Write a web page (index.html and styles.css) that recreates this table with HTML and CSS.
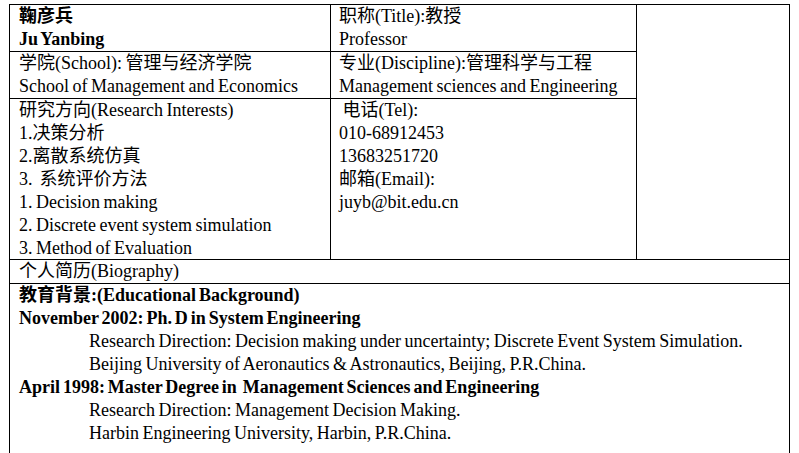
FILE: index.html
```html
<!DOCTYPE html>
<html lang="zh-CN">
<head>
<meta charset="utf-8">
<title>鞠彦兵 Ju Yanbing</title>
<link rel="stylesheet" href="styles.css">
</head>
<body>
<div class="sheet">
  <div class="cell c1 r1">
    <div class="b">鞠彦兵</div>
    <div class="b">Ju Yanbing</div>
  </div>
  <div class="cell c2 r1">
    <div>职称(Title):教授</div>
    <div>Professor</div>
  </div>
  <div class="cell c3 photo"></div>
  <div class="cell c1 r2">
    <div>学院(School): 管理与经济学院</div>
    <div>School of Management and Economics</div>
  </div>
  <div class="cell c2 r2">
    <div>专业(Discipline):管理科学与工程</div>
    <div>Management sciences and Engineering</div>
  </div>
  <div class="cell c1 r3">
    <div>研究方向(Research Interests)</div>
    <div>1.决策分析</div>
    <div>2.离散系统仿真</div>
    <div>3.&nbsp; 系统评价方法</div>
    <div>1. Decision making</div>
    <div>2. Discrete event system simulation</div>
    <div>3. Method of Evaluation</div>
  </div>
  <div class="cell c2 r3">
    <div>&nbsp;电话(Tel):</div>
    <div>010-68912453</div>
    <div>13683251720</div>
    <div>邮箱(Email):</div>
    <div>juyb@bit.edu.cn</div>
  </div>
  <div class="cell full bio">个人简历(Biography)</div>
  <div class="cell full edu">
    <div class="b">教育背景:(Educational Background)</div>
    <div class="b">November 2002: Ph. D in System Engineering</div>
    <div class="ind">Research Direction: Decision making under uncertainty; Discrete Event System Simulation.</div>
    <div class="ind">Beijing University of Aeronautics &amp; Astronautics, Beijing, P.R.China.</div>
    <div class="b">April 1998: Master Degree in&nbsp; Management Sciences and Engineering</div>
    <div class="ind">Research Direction: Management Decision Making.</div>
    <div class="ind">Harbin Engineering University, Harbin, P.R.China.</div>
    <div class="ind">&nbsp;</div>
  </div>
</div>
</body>
</html>
```
FILE: styles.css
```css
html, body {
  margin: 0;
  padding: 0;
  background: #ffffff;
}
body {
  font-family: "Liberation Serif", "Noto Sans CJK SC", serif;
  font-size: 18px;
  line-height: 23px;
  color: #000000;
  word-spacing: -1px;
}
.sheet {
  margin: 4px 0 0 9px;
  width: 780px;
  display: grid;
  grid-template-columns: 321px 306px 153px;
  grid-template-rows: 47px 47px 161px 24px auto;
  border-left: 1px solid #000;
  border-top: 1px solid #000;
}
.cell {
  border-right: 1px solid #000;
  border-bottom: 1px solid #000;
  white-space: nowrap;
  overflow: visible;
}
.c1 { grid-column: 1; padding-left: 9px; }
.c2 { grid-column: 2; padding-left: 8px; }
.c3 { grid-column: 3; }
.r1 { grid-row: 1; }
.r2 { grid-row: 2; }
.r3 { grid-row: 3; }
.photo { grid-row: 1 / 4; }
.full { grid-column: 1 / 4; padding-left: 9px; }
.bio { grid-row: 4; }
.edu { grid-row: 5; }
.b { font-weight: bold; word-spacing: -1.6px; }
.ind { padding-left: 70px; }
```
